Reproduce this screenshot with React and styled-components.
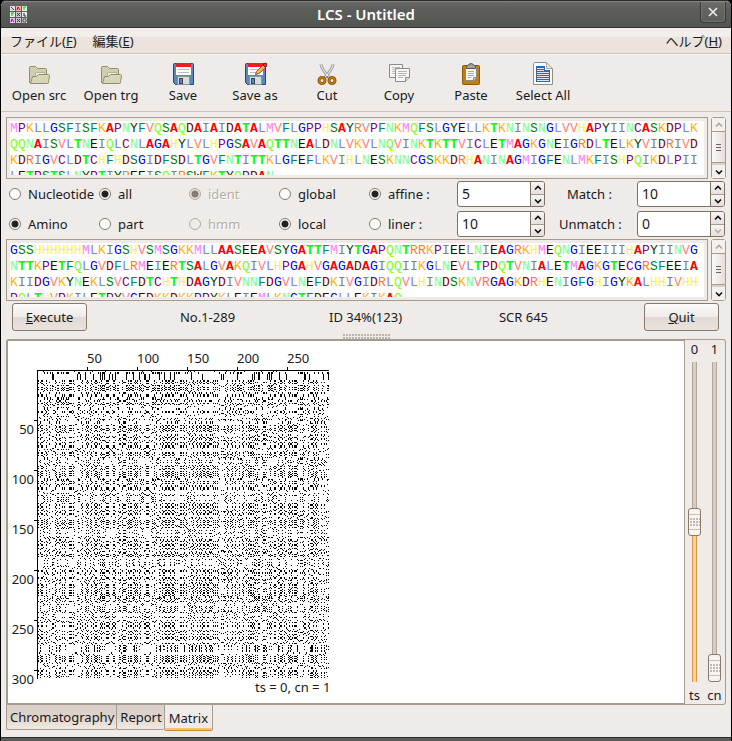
import React, { useMemo, useState } from "react";
import styled, { createGlobalStyle, css } from "styled-components";

const UI_FONT = '"Noto Sans", "Noto Sans CJK JP", sans-serif';
const LINE = "#a59b8e";
const FACE = "#efebe9";

const Global = createGlobalStyle`
  * { box-sizing: border-box; }
  body { margin: 0; background: #000; font: 13px/18px ${UI_FONT}; color: #1a1a1a; }
  button, input { font: inherit; color: inherit; margin: 0; }
`;

/* ---------- data ---------- */

const SEQ_SRC =
  "MPKLLGSFISFKAPNYFVQSAQDAIAIDATALMVFLGPPHSAYRVPFNKMQFSLGYELLKTKNINSNGLVVHAPYIINCASKDPLK" +
  "QQNAISVLTNEIQLCNLAGAHYLVLHPGSAVAQTTNEALDNLVKVLNQVINKTKTTVICLETMAGKGNEIGRDLTELKYVIDRIVD" +
  "KDRIGVCLDTCHFHDSGIDFSDLTGVFNTITTKLGFEFLKVIHLNESKNNCGSKKDRHANINAGMIGFENLMKFISHPQIKDLPII" +
  "LETPSTSLNYPTIYREEISQIRSWFKTYQPDAN";

const SEQ_TRG =
  "GSSHHHHHHMLKIGSHVSMSGKKMLLAASEEAVSYGATTFMIYTGAPQNTRRKPIEELNIEAGRKHMEQNGIEEIIIHAPYIINVG" +
  "NTTKPETFQLGVDFLRMEIERTSALGVAKQIVLHPGAHVGAGADAGIQQIIKGLNEVLTPDQTVNIALETMAGKGTECGRSFEEIA" +
  "KIIDGVKYNEKLSVCFDTCHTHDAGYDIVNNFDGVLNEFDKIVGIDRLQVLHINDSKNVRGAGKDRHENIGFGHIGYKALHHIVHH" +
  "PQLTHVPKILETPYVGEDKKDKKPPYKLEIEMLKNGTFDEGLLEKIKAQ";

const RESIDUE_COLORS = {
  A: "#ff0000", R: "#ff8000", N: "#80ff80", D: "#800000", C: "#800080",
  Q: "#80ff00", E: "#400000", G: "#0000ff", H: "#ffff00", I: "#808080",
  L: "#8080ff", K: "#ffb400", M: "#ff80ff", F: "#008080", P: "#800080",
  S: "#008000", T: "#00ff00", W: "#404000", Y: "#004000", V: "#ff8080",
};

// Residues drawn in a heavier weight.
const HEAVY = new Set(["A", "T"]);

// Residue pairs with a positive substitution score, besides identical ones.
const SIMILAR = new Set(
  "AS RQ RK ND NH NS DE QE QK EK HY IL IM IV LM LV MV FY FW WY ST"
    .split(" ")
    .flatMap((p) => [p, p[1] + p[0]])
);

function dotPath(a, b) {
  let d = "";
  for (let y = 0; y < b.length; y++) {
    for (let x = 0; x < a.length; x++) {
      if (a[x] === b[y] || SIMILAR.has(a[x] + b[y])) d += `M${x} ${y}h1v1h-1z`;
    }
  }
  return d;
}

/* ---------- window ---------- */

const Window = styled.div`
  min-height: 100vh;
  display: flex;
  flex-direction: column;
  background: ${FACE};
  border: 1px solid #000;
  border-top-color: #2c2c2a;
  border-radius: 6px 6px 3px 3px;
  overflow: hidden;
`;

const TitleBar = styled.header`
  display: grid;
  grid-template-columns: 40px 1fr 40px;
  align-items: center;
  height: 27px;
  color: #fff;
  background: linear-gradient(#686866, #5c5d5a 30%, #535650);
  border-top: 1px solid #83837f;
  border-bottom: 1px solid #30312e;
`;

const AppMark = styled.svg`
  width: 18px;
  height: 18px;
  margin-left: 8px;
`;

const Title = styled.h1`
  margin: 0;
  padding-bottom: 1px;
  text-align: center;
  font-size: 15px;
  line-height: 20px;
  font-weight: 600;
`;

const CloseButton = styled.button`
  justify-self: end;
  align-self: start;
  display: grid;
  place-items: center;
  width: 26px;
  height: 21px;
  margin-right: 5px;
  padding: 0;
  color: #eee;
  background: linear-gradient(#6a6a67, #5b5d59);
  border: 1px solid #383936;
  border-top: 0;
  border-radius: 0 0 4px 4px;
  box-shadow: inset 0 0 0 1px #74746f;
`;

const MenuBar = styled.nav`
  display: flex;
  gap: 16px;
  height: 26px;
  padding: 3px 9px 0;
  background: linear-gradient(#f2eeec 35%, #ebe3dc 36%);
  border-bottom: 1px solid #cbc3b7;
`;

const MenuButton = styled.button`
  padding: 0;
  border: 0;
  background: none;
  height: 20px;
  line-height: 20px;
  ${(p) => p.$end && css`margin-left: auto;`}
`;

const ToolBar = styled.div`
  display: flex;
  height: 58px;
  padding: 7px 2px 0;
  border-top: 1px solid #faf8f7;
  border-bottom: 1px solid #cbc3b7;
`;

const ToolButton = styled.button`
  display: flex;
  flex-direction: column;
  align-items: center;
  width: 72px;
  padding: 0;
  border: 0;
  background: none;
  white-space: nowrap;
  svg { display: block; width: 24px; height: 24px; }
`;

const Body = styled.main`
  flex: 1;
  display: flex;
  flex-direction: column;
  padding: 5px 5px 6px;
`;

/* ---------- sequences ---------- */

const SequenceRow = styled.div`
  display: flex;
  gap: 3px;
  height: 62px;
`;

const SequenceFrame = styled.div`
  flex: 1;
  min-width: 0;
  padding: 3px;
  border: 1px solid ${LINE};
`;

const SequenceText = styled.div`
  height: 54px;
  overflow: hidden;
  background: #fff;
  font-family: "Liberation Mono", monospace;
  font-size: 13px;
  line-height: 16px;
`;

const Residue = styled.span`
  display: inline-block;
  vertical-align: top;
  width: 8px;
  height: 16px;
  color: ${(p) => p.$color};
  font-weight: ${(p) => (p.$heavy ? 700 : 400)};
`;

const ScrollBar = styled.div`
  display: flex;
  flex-direction: column;
  width: 15px;
  border: 1px solid ${LINE};
  border-radius: 3px;
  background: #d9d1cb;
`;

const ScrollButton = styled.button`
  display: grid;
  place-items: center;
  height: 13px;
  padding: 0;
  border: 0;
  color: ${(p) => (p.disabled ? "#b0a79c" : "#111")};
  background: #f3f0ee;
`;

const ScrollThumb = styled.div`
  flex: 1;
  display: grid;
  place-items: center;
  margin-bottom: 2px;
  border: solid ${LINE};
  border-width: 1px 0;
  background: linear-gradient(90deg, #faf9f8, #e6dedb);
`;

/* ---------- options ---------- */

const Options = styled.div`
  display: grid;
  grid-template-columns: repeat(8, 1fr);
  grid-auto-rows: 30px;
  align-items: center;
`;

const RadioLabel = styled.label`
  display: flex;
  align-items: center;
  gap: 7px;
  padding-left: 3px;
  white-space: nowrap;
  color: ${(p) => (p.$disabled ? "#b8afa4" : "inherit")};
  text-shadow: ${(p) => (p.$disabled ? "1px 1px #fff" : "none")};
`;

const Radio = styled.input`
  appearance: none;
  flex: none;
  width: 12px;
  height: 12px;
  border: 1px solid #857a6e;
  border-radius: 50%;
  background: #fff;
  &:checked { background: radial-gradient(circle at 5px 5px, #222 0 3px, #fff 4px); }
  &:disabled { border-color: #b5aca2; background: ${FACE}; }
  &:disabled:checked { background: radial-gradient(circle at 5px 5px, #857b72 0 3px, #e5dfda 4px); }
`;

const SpinLabel = styled.label`
  padding-left: ${(p) => (p.$wide ? "13px" : "21px")};
  white-space: nowrap;
`;

const Spin = styled.div`
  display: grid;
  grid-template-columns: 1fr 14px;
  width: calc(100% - 2px);
  height: 26px;
  margin-left: 1px;
  border: 1px solid #7d7164;
  border-radius: 3px;
  background: #fff;
  overflow: hidden;
`;

const SpinInput = styled.input`
  min-width: 0;
  padding: 0 4px;
  border: 0;
  outline: 0;
  background: none;
  font-size: 14px;
`;

const SpinButtons = styled.div`
  display: grid;
  grid-template-rows: 1fr 1fr;
  border-left: 1px solid #7d7164;
`;

const SpinButton = styled.button`
  display: grid;
  place-items: center;
  padding: 0;
  border: 0;
  color: ${(p) => (p.disabled ? "#b8afa4" : "#111")};
  background: linear-gradient(#f7f5f4, #e6dfdb);
  & + & { border-top: 1px solid ${LINE}; }
`;

/* ---------- status ---------- */

const StatusRow = styled.div`
  display: flex;
  justify-content: space-between;
  align-items: center;
  height: 32px;
  padding: 0 7px 0 6px;
`;

const Status = styled.span`
  display: flex;
  justify-content: center;
  width: 75px;
  white-space: nowrap;
`;

const PushButton = styled.button`
  width: 75px;
  height: 28px;
  padding: 0;
  border: 1px solid #857a6c;
  border-radius: 3px;
  background: linear-gradient(#fbfaf9, #efebe8 50%, #e2d9d4 51%, #e9e2de);
`;

const Grip = styled.div`
  width: 47px;
  height: 5px;
  margin: 1px auto 0;
  background: radial-gradient(circle at 1px 1px, #bdb5aa 0 1px, transparent 1px) 0 0 / 3px 3px;
`;

/* ---------- matrix ---------- */

const Panel = styled.section`
  flex: 1;
  display: flex;
`;

const Plot = styled.div`
  flex: 1;
  min-width: 0;
  background: #fff;
  border: 2px solid ${LINE};
  border-right-width: 1px;
  border-radius: 3px 0 0 0;
`;

const PlotSvg = styled.svg`
  display: block;
  font-size: 13px;
`;

const Sliders = styled.div`
  display: flex;
  gap: 3px;
  padding: 0 2px 0 1px;
  border: 1px solid ${LINE};
  border-left: 0;
  border-radius: 0 3px 3px 0;
`;

const SliderLabel = styled.label`
  display: flex;
  flex-direction: column;
  align-items: center;
  width: 17px;
  gap: 4px;
`;

const Slider = styled.input`
  appearance: none;
  writing-mode: vertical-lr;
  direction: rtl;
  flex: 1;
  width: 13px;
  min-height: 320px;
  background:
    linear-gradient(90deg, #b0a69c 1px, #d6cdc6 1px 4px, #b0a69c 4px) center top / 5px calc(100% - var(--fill)) no-repeat,
    linear-gradient(90deg, #d49a4a 1px, #fdd095 1px 4px, #d49a4a 4px) center bottom / 5px var(--fill) no-repeat;
  &::-webkit-slider-thumb {
    appearance: none;
    width: 13px;
    height: 28px;
    border: 1px solid #857a6c;
    border-radius: 3px;
    background:
      linear-gradient(#f6f3f1 5px, #c9c0b8 5px 6px, #f6f3f1 6px 9px, transparent 9px 18px, #f6f3f1 18px 20px, #c9c0b8 20px 21px, #f6f3f1 21px),
      radial-gradient(circle at 1px 1px, #c3bab1 0 1px, transparent 1px) 1px 0 / 3px 3px,
      #f6f3f1;
  }
`;

const Tabs = styled.div`
  display: flex;
  align-items: flex-start;
  height: 26px;
`;

const Tab = styled.button`
  height: 25px;
  padding: 0 2px 0 3px;
  white-space: nowrap;
  border: 1px solid ${LINE};
  border-top: 0;
  border-right-width: 0;
  border-radius: 0 0 2px 2px;
  background: linear-gradient(#d9d0ca, #ddd4ce 50%, #f1eae3);
  &[aria-selected="true"] {
    height: 26px;
    padding: 0 4px;
    border-right-width: 1px;
    border-bottom: 1px solid #cc8a36;
    background: ${FACE};
    box-shadow: inset 0 -2px #fdbf70;
  }
`;

const Foot = styled.footer`
  height: 5px;
  background: linear-gradient(#2f302e 1px, #5c5d5a 1px);
`;

/* ---------- icons ---------- */

const Chevron = ({ up }) => (
  <svg width="8" height="6" viewBox="0 0 8 6" fill="none" stroke="currentColor" strokeWidth="1.6">
    <path d={up ? "M1 4.500L4 1.500L7 4.500" : "M1 1.500L4 4.500L7 1.500"} />
  </svg>
);

const FolderIcon = () => (
  <svg viewBox="0 0 24 24" stroke="#8f8f70" strokeLinejoin="round">
    <path d="M2.500 20.500V5.500Q2.500 4.500 3.500 4.500H8.500L10.500 6.500H18.500Q19.500 6.500 19.500 7.500V20.500Z" fill="#cfcfae" />
    <path d="M8.500 13.500V10.500H17.500V13.500" fill="#f0f0e4" stroke="#b1b194" />
    <path d="M5.500 14.500H9.500L11.500 12.500H21.500Q22.500 12.500 22.500 13.500L21.500 20.500Q21.500 21.500 20.500 21.500H3.500Z" fill="#d7d7b8" />
  </svg>
);

const Disk = () => (
  <>
    <path d="M2.500 2.500Q2.500 1.500 3.500 1.500H21.500Q22.500 1.500 22.500 2.500V22.500H4.500L2.500 20.500Z" fill="#5b86be" stroke="#204a87" />
    <rect x="5" y="2" width="15" height="11" fill="#fff" />
    <rect x="5" y="1" width="15" height="4" fill="#ef1d1d" />
    <path d="M7 7.500H18M7 10.500H18" stroke="#bcbcbc" />
    <rect x="6.500" y="14.500" width="12" height="8" fill="#d8dbd8" stroke="#8a929c" />
    <rect x="8.500" y="16.500" width="3" height="5" fill="#5b86be" stroke="#33475f" />
  </>
);

const SaveIcon = () => <svg viewBox="0 0 24 24"><Disk /></svg>;

const SaveAsIcon = () => (
  <svg viewBox="0 0 24 24">
    <Disk />
    <path d="M12.500 12.500L13.500 9.500L20 3L22.500 5.500L16 11.500Z" fill="#f5b55b" stroke="#87551a" />
    <path d="M20 3L21.500 1.500Q23 0.500 24 2Q24.500 3.500 22.500 5.500Z" fill="#e03030" stroke="#8d1111" />
  </svg>
);

const CutIcon = () => (
  <svg viewBox="0 0 24 24" fill="none">
    <path d="M6 2Q6 6 14 15.500M18 2Q18 6 10 15.500" stroke="#a0a29e" strokeWidth="3" />
    <path d="M6 2Q6 6 14 15.500M18 2Q18 6 10 15.500" stroke="#f4f4f2" />
    <ellipse cx="7" cy="18.500" rx="3" ry="3" stroke="#8f5902" strokeWidth="3" />
    <ellipse cx="17" cy="18.500" rx="3" ry="3" stroke="#8f5902" strokeWidth="3" />
    <ellipse cx="7" cy="18.500" rx="3" ry="3" stroke="#d18b1b" />
    <ellipse cx="17" cy="18.500" rx="3" ry="3" stroke="#d18b1b" />
    <circle cx="12" cy="15" r="1" fill="#777" />
  </svg>
);

const CopyIcon = () => (
  <svg viewBox="0 0 24 24" stroke="#8b8d89">
    <path d="M2.500 2.500H15.500V15.500H2.500Z" fill="#f5f5f4" />
    <path d="M5 5.500H13M5 7.500H13M5 9.500H8M5 11.500H8" stroke="#bdbdbb" />
    <path d="M8.500 6.500H22.500V15.500L18.500 19.500H8.500Z" fill="#f7f7f6" />
    <path d="M22.500 15.500H18.500V19.500" fill="#ddd" />
    <path d="M11 9.500H20M11 11.500H20M11 13.500H19M11 15.500H16" stroke="#b4b4b2" />
  </svg>
);

const PasteIcon = () => (
  <svg viewBox="0 0 24 24">
    <rect x="3.500" y="3.500" width="17" height="19" rx="1" fill="#c17d11" stroke="#8f5902" />
    <path d="M6.500 5.500H17.500V15.500L14.500 18.500H6.500Z" fill="#f5f5f4" stroke="#888a85" />
    <path d="M17.500 15.500H14.500V18.500" fill="#d3d3d0" stroke="#888a85" />
    <path d="M9 9.500H15M9 11.500H15M9 13.500H15M9 15.500H12" stroke="#aaa" />
    <path d="M7.500 6.500V4.500Q9 3.500 9.500 2.500Q12 0.500 14.500 2.500Q15 3.500 16.500 4.500V6.500Z" fill="#a2a49f" stroke="#555753" />
  </svg>
);

const SelectAllIcon = () => (
  <svg viewBox="0 0 24 24">
    <path d="M3.500 0.500H15.500L21.500 6.500V22.500H2.500V1.500Z" fill="#fafafa" stroke="#8b8d89" />
    <path d="M15.500 0.500V6.500H21.500Z" fill="#e4e4e2" stroke="#a5a7a3" />
    <path d="M5 4H14V8H19V20H5Z" fill="#3465a4" />
    <path d="M6 6.500H13M6 8.500H13M6 10.500H18M6 12.500H18M6 14.500H18M6 16.500H18M6 18.500H18" stroke="#dbe6f4" />
  </svg>
);

const MARK_TILES = [
  ["#ddd", "#444", "M1 1L4 4"], ["#f8b0b0", "#d00", "M1 4L2 1L4 4"], ["#d8ffd8", "#0c3", "M1 1H4M2 1V4"],
  ["#d8ffd8", "#0b0", "M1 1H4M2 1V4"], ["#ccc", "#333", "M1 1L4 4M4 1L1 4"], ["#eee", "#222", "M2 1V4H4"],
  ["#f0c0f0", "#a0a", "M1 4L2 1L4 4"], ["#ccc", "#333", "M1 1L4 4M4 1L1 4"], ["#ddd", "#444", "M1 1H4V4H1Z"],
];

const Mark = () => (
  <AppMark viewBox="0 0 18 18">
    {MARK_TILES.map(([fill, ink, d], i) => (
      <g key={i} transform={`translate(${(i % 3) * 6 + 1} ${Math.floor(i / 3) * 6})`}>
        <rect width="5" height="5" fill={fill} />
        <path d={d} stroke={ink} fill="none" />
      </g>
    ))}
  </AppMark>
);

const TOOLS = [
  ["Open src", FolderIcon], ["Open trg", FolderIcon], ["Save", SaveIcon], ["Save as", SaveAsIcon],
  ["Cut", CutIcon], ["Copy", CopyIcon], ["Paste", PasteIcon], ["Select All", SelectAllIcon],
];

/* ---------- parts ---------- */

function Sequence({ value }) {
  return (
    <SequenceRow>
      <SequenceFrame>
        <SequenceText>
          {[...value].map((c, i) => (
            <Residue key={i} $color={RESIDUE_COLORS[c]} $heavy={HEAVY.has(c)}>{c}</Residue>
          ))}
        </SequenceText>
      </SequenceFrame>
      <ScrollBar>
        <ScrollButton aria-label="Scroll up" disabled><Chevron up /></ScrollButton>
        <ScrollThumb>
          <svg width="5" height="7" stroke="#6d645a"><path d="M0 .5H5M0 3.500H5M0 6.500H5" /></svg>
        </ScrollThumb>
        <ScrollButton aria-label="Scroll down"><Chevron /></ScrollButton>
      </ScrollBar>
    </SequenceRow>
  );
}

function Choice({ group, label, checked, disabled }) {
  return (
    <RadioLabel $disabled={disabled}>
      <Radio type="radio" name={group} defaultChecked={checked} disabled={disabled} />
      {label}
    </RadioLabel>
  );
}

function SpinBox({ id, label, initial }) {
  const [value, setValue] = useState(initial);
  return (
    <Spin>
      <SpinInput id={id} aria-label={label} value={value} onChange={(e) => setValue(Number(e.target.value) || 0)} />
      <SpinButtons>
        <SpinButton aria-label="Increase" onClick={() => setValue(value + 1)}><Chevron up /></SpinButton>
        <SpinButton aria-label="Decrease" disabled={value <= 0} onClick={() => setValue(value - 1)}><Chevron /></SpinButton>
      </SpinButtons>
    </Spin>
  );
}

function Level({ name, shown, initial }) {
  const [value, setValue] = useState(initial);
  return (
    <SliderLabel>
      <span>{shown}</span>
      <Slider
        type="range"
        aria-label={name}
        value={value}
        onChange={(e) => setValue(Number(e.target.value))}
        style={{ "--fill": `${value}%` }}
      />
      <span>{name}</span>
    </SliderLabel>
  );
}

function Matrix() {
  const dots = useMemo(() => dotPath(SEQ_SRC, SEQ_TRG), []);
  const xs = [50, 100, 150, 200, 250];
  const ys = [...xs, 300];
  return (
    <PlotSvg width="360" height="358" viewBox="0 0 360 358" fill="#1a1a1a">
      <g shapeRendering="crispEdges">
        <path d={dots} transform="translate(30 30)" fill="#000" />
        <path
          d={
            "M29 29.500H321M29.500 29V338" +
            xs.map((v) => `M${29.5 + v} 26V30`).join("") +
            ys.map((v) => `M26 ${29.5 + v}H30`).join("")
          }
          stroke="#000"
        />
      </g>
      {xs.map((v) => <text key={v} x={v + 29} y="22">{v}</text>)}
      {ys.map((v) => <text key={v} x="26" y={v + 43} textAnchor="end">{v}</text>)}
      <text x="247" y="351">ts = 0, cn = 1</text>
    </PlotSvg>
  );
}

export default function App() {
  return (
    <>
      <Global />
      <Window>
        <TitleBar>
          <Mark />
          <Title>LCS - Untitled</Title>
          <CloseButton aria-label="Close">
            <svg width="12" height="12" stroke="currentColor" strokeWidth="1.6"><path d="M2 2L10 10M10 2L2 10" /></svg>
          </CloseButton>
        </TitleBar>
        <MenuBar>
          <MenuButton>ファイル(<u>F</u>)</MenuButton>
          <MenuButton>編集(<u>E</u>)</MenuButton>
          <MenuButton $end>ヘルプ(<u>H</u>)</MenuButton>
        </MenuBar>
        <ToolBar>
          {TOOLS.map(([label, Icon]) => <ToolButton key={label}><Icon />{label}</ToolButton>)}
        </ToolBar>
        <Body>
          <Sequence value={SEQ_SRC} />
          <Options>
            <Choice group="kind" label="Nucleotide" />
            <Choice group="range" label="all" checked />
            <Choice group="method" label="ident" checked disabled />
            <Choice group="scope" label="global" />
            <Choice group="gap" label="affine :" checked />
            <SpinBox label="affine" initial={5} />
            <SpinLabel htmlFor="match">Match :</SpinLabel>
            <SpinBox id="match" label="Match" initial={10} />
            <Choice group="kind" label="Amino" checked />
            <Choice group="range" label="part" />
            <Choice group="method" label="hmm" disabled />
            <Choice group="scope" label="local" checked />
            <Choice group="gap" label="liner :" />
            <SpinBox label="liner" initial={10} />
            <SpinLabel htmlFor="unmatch" $wide>Unmatch :</SpinLabel>
            <SpinBox id="unmatch" label="Unmatch" initial={0} />
          </Options>
          <Sequence value={SEQ_TRG} />
          <StatusRow>
            <PushButton><u>E</u>xecute</PushButton>
            <Status>No.1-289</Status>
            <Status>ID 34%(123)</Status>
            <Status>SCR 645</Status>
            <PushButton><u>Q</u>uit</PushButton>
          </StatusRow>
          <Grip />
          <Panel>
            <Plot><Matrix /></Plot>
            <Sliders>
              <Level name="ts" shown="0" initial={50} />
              <Level name="cn" shown="1" initial={0} />
            </Sliders>
          </Panel>
          <Tabs role="tablist">
            <Tab role="tab" aria-selected="false">Chromatography</Tab>
            <Tab role="tab" aria-selected="false">Report</Tab>
            <Tab role="tab" aria-selected="true">Matrix</Tab>
          </Tabs>
        </Body>
        <Foot />
      </Window>
    </>
  );
}
